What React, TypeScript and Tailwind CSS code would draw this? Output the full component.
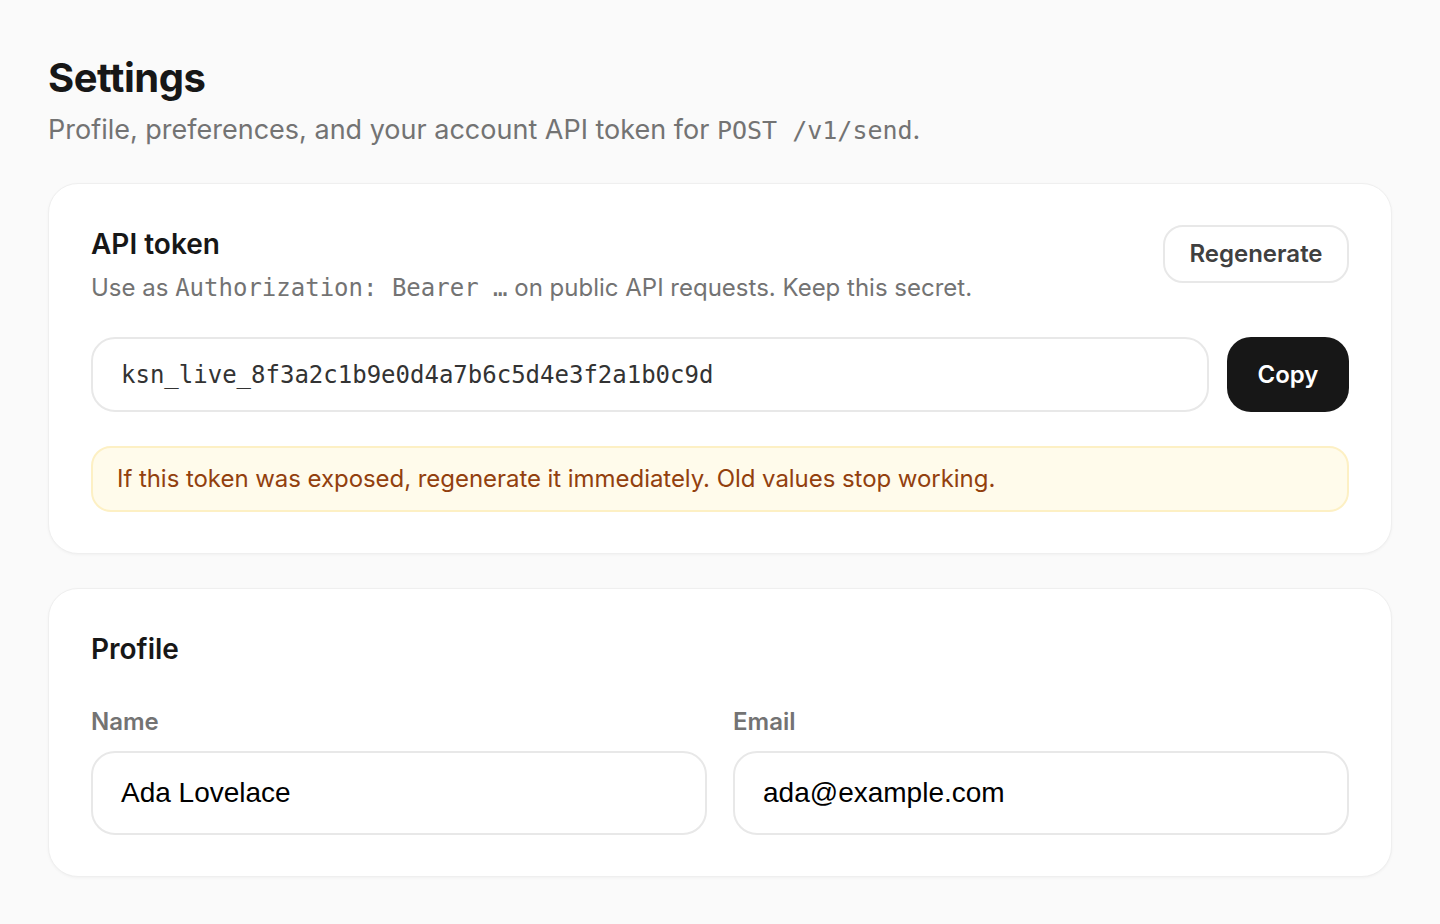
import React from "react";

const sans = { fontFamily: "Inter, 'Liberation Sans', sans-serif" };

export default function App() {
  return (
    <div
      className="min-h-[924px] w-full bg-[#fafafa] px-12 pt-[52px] pb-12 text-[#171717]"
      style={sans}
    >
      <h1 className="text-[40px] font-bold leading-[52px] tracking-[-0.5px] text-[#171717]">
        Settings
      </h1>
      <p className="mt-[6px] text-[27px] leading-[40px] text-[#737373]">
        Profile, preferences, and your account API token for{" "}
        <code className="font-['DejaVu_Sans_Mono',monospace] text-[25px]">POST /v1/send</code>.
      </p>

      <section className="mt-[32px] rounded-[30px] border border-[#efefef] bg-white px-[42px] pt-[42px] pb-[41px] shadow-[0_1px_3px_rgba(0,0,0,0.04)]">
        <div className="flex items-start justify-between">
          <div>
            <h2 className="text-[28px] font-semibold leading-[36px] text-[#171717]">API token</h2>
            <p className="mt-[10px] text-[24px] leading-[32px] text-[#737373]">
              Use as{" "}
              <code className="font-['DejaVu_Sans_Mono',monospace] text-[24px]">
                Authorization: Bearer …
              </code>{" "}
              on public API requests. Keep this secret.
            </p>
          </div>
          <button className="-mt-[1px] h-[58px] w-[186px] rounded-[20px] border-2 border-[#e8e8e8] bg-white text-[24px] font-semibold text-[#404040]">
            Regenerate
          </button>
        </div>

        <div className="mt-[33px] flex gap-[18px]">
          <div className="flex h-[75px] flex-1 items-center rounded-[24px] border-2 border-[#e8e8e8] bg-white px-[28px]">
            <span className="font-['DejaVu_Sans_Mono',monospace] text-[24px] text-[#333333]">
              ksn_live_8f3a2c1b9e0d4a7b6c5d4e3f2a1b0c9d
            </span>
          </div>
          <button className="h-[75px] w-[122px] rounded-[24px] bg-[#171717] text-[24px] font-semibold text-white">
            Copy
          </button>
        </div>

        <div className="mt-[34px] flex h-[66px] items-center rounded-[20px] border-2 border-[#fdf0c4] bg-[#fffbeb] px-[24px]">
          <span className="text-[24px] tracking-[-0.05px] text-[#92400e]">
            If this token was exposed, regenerate it immediately. Old values stop working.
          </span>
        </div>
      </section>

      <section className="mt-[34px] rounded-[30px] border border-[#efefef] bg-white px-[42px] pt-[42px] pb-[41px] shadow-[0_1px_3px_rgba(0,0,0,0.04)]">
        <h2 className="text-[28px] font-semibold leading-[36px] text-[#171717]">Profile</h2>
        <div className="mt-[39px] grid grid-cols-2 gap-[26px]">
          <div>
            <div className="text-[24px] font-semibold leading-[32px] text-[#737373]">Name</div>
            <div className="mt-[13px] flex h-[84px] items-center rounded-[24px] border-2 border-[#e8e8e8] bg-white px-[28px] font-['Liberation_Sans',Arial,sans-serif] text-[28px] text-black">
              Ada Lovelace
            </div>
          </div>
          <div>
            <div className="text-[24px] font-semibold leading-[32px] text-[#737373]">Email</div>
            <div className="mt-[13px] flex h-[84px] items-center rounded-[24px] border-2 border-[#e8e8e8] bg-white px-[28px] font-['Liberation_Sans',Arial,sans-serif] text-[28px] text-black">
              ada@example.com
            </div>
          </div>
        </div>
      </section>
    </div>
  );
}
